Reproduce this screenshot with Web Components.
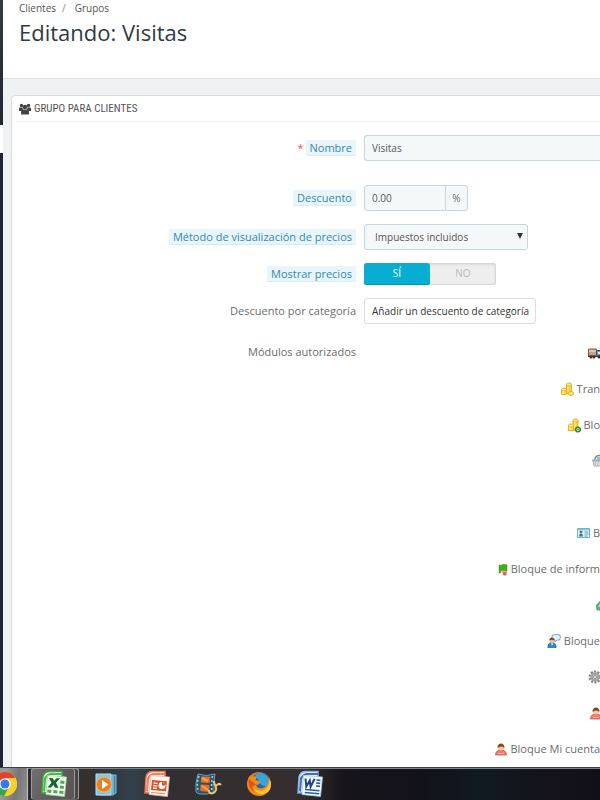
<!DOCTYPE html>
<html lang="es">
<head>
<meta charset="utf-8">
<meta name="viewport" content="width=device-width, initial-scale=1">
<title>Editando: Visitas</title>
<style>
  html, body {
    margin: 0;
    height: 100%;
  }
  body {
    font-family: "Open Sans", sans-serif;
    font-size: 11px;
    line-height: 18px;
    color: #6c6c6c;
    background: #eff1f2;
    overflow: hidden;
  }
</style>
</head>
<body>
<desktop-screen>
  <side-strip slot="side"></side-strip>
  <page-header heading="Editando: Visitas">
    <a href="#clientes">Clientes</a>
    <a href="#grupos">Grupos</a>
  </page-header>
  <form-panel heading="Grupo para clientes">
    <form-row label="Nombre" for="name" hint required></form-row>
    <form-row label="Descuento" for="reduction" hint></form-row>
    <form-row label="Método de visualización de precios" for="method" hint></form-row>
    <form-row label="Mostrar precios" for="show" hint></form-row>
    <form-row label="Descuento por categoría" for="category"></form-row>
    <form-row label="Módulos autorizados" for="modules"></form-row>
  </form-panel>
  <task-bar slot="taskbar"></task-bar>
</desktop-screen>

<script>
// 16px high module icons. The ones at the edge of the list are narrower.
const moduleIcons = {
  truck: `<svg width="12" height="16" viewBox="0 0 12 16"><path d="M0.5 4h8v7h-8z" fill="#c9a184" stroke="#7d5d48"/><path d="M1 5h7v2H1z" fill="#e2c3aa"/><path d="M8.500 5.500H14.500V11H8.500z" fill="#5d9fd6" stroke="#31577d"/><path d="M10 7h3v2h-3z" fill="#d4efff"/><path d="M0 10.500h15v1.500H0z" fill="#58453c"/><circle cx="3" cy="12" r="1.500" fill="#333"/><circle cx="6" cy="12" r="1.500" fill="#333"/><circle cx="11" cy="12" r="1.500" fill="#333"/></svg>`,
  coins: `<svg width="13" height="16" viewBox="0 0 13 16"><path d="M5.500 3.500v9h5v-9z" fill="#fbce3c" stroke="#e9b020"/><ellipse cx="8" cy="3.500" rx="2.500" ry="1.500" fill="#ffec8a" stroke="#e9b020"/><path d="M.5 8.500v5h5v-5z" fill="#fdd850" stroke="#e9b020"/><ellipse cx="3" cy="8.500" rx="2.500" ry="1.500" fill="#fff0a0" stroke="#e9b020"/><path d="M7 5v6M2 10v3" stroke="#fff2a0"/><ellipse cx="10" cy="12.500" rx="2.500" ry="2" fill="#ffe98a" stroke="#e8a820"/></svg>`,
  coinsAdd: `<svg width="13" height="16" viewBox="0 0 13 16"><path d="M5 3.500v10h5v-10z" fill="#fbce3c" stroke="#e9b020"/><ellipse cx="7.500" cy="3.500" rx="2.500" ry="1.500" fill="#ffec8a" stroke="#e9b020"/><path d="M.5 8.500v5h5v-5z" fill="#fdd850" stroke="#e9b020"/><ellipse cx="3" cy="8.500" rx="2.500" ry="1.500" fill="#fff0a0" stroke="#e9b020"/><path d="M7 5v6M2 10v3" stroke="#fff2a0"/><circle cx="10" cy="12.500" r="2.300" fill="#fff" stroke="#2f8a2c" stroke-width="1.600"/><path d="M9 12.500h2M10 11.500v2" stroke="#5aa955"/></svg>`,
  basket: `<svg width="8" height="16" viewBox="0 0 8 16"><path d="M3 7a4 4 0 0 1 6-4" fill="none" stroke="#6a8ea5" stroke-width="1.500"/><path d="M5 4h6v4H5z" fill="#8bc0e0"/><path d="M0 6.500h11V8H0z" fill="#b2b8ba"/><path d="M1 8h10v5H2z" fill="#dde0e0" stroke="#a4aaac"/><path d="M3.500 8.500v4M6 8.500v4M8.500 8.500v4" stroke="#b8bec0"/></svg>`,
  card: `<svg width="13" height="16" viewBox="0 0 13 16"><path d="M.5 3.500h12v9H.5z" fill="#dff3fb" stroke="#69b3d1"/><path d="M1 4h11v1.500H1z" fill="#8ccbe4"/><circle cx="4" cy="7" r="1.500" fill="#9b6a43"/><path d="M2 11.500c0-4 4-4 4 0z" fill="#2b80ad"/><path d="M7.500 7h4M7.500 9h4M7.500 11h3" stroke="#5ba4c4"/></svg>`,
  flag: `<svg width="10" height="16" viewBox="0 0 10 16"><path d="M1 4l2.500.3L5 3.300l4 .5V10H5.500L4 9.500 2.500 10v2H1z" fill="#44ad13" stroke="#3a9a10" stroke-width=".5"/><path d="M4 10.500h5l-.8 4H5.500z" fill="#d9606d"/><path d="M3.300 10.500h5" stroke="#eea0ac" stroke-width="1.500"/></svg>`,
  tag: `<svg width="4" height="16" viewBox="0 0 4 16"><path d="M.5 8L3 5.500 5 3v10H1z" fill="#4ebc75" stroke="#339b5b" stroke-width=".8"/><path d="M1.800 9l3-3v5z" fill="#a2e4b8"/></svg>`,
  chat: `<svg width="14" height="16" viewBox="0 0 14 16"><path d="M5.500 2q4-1 7.500 0 1 3-.5 5H10l-2 2V7H5.500q-1.500-2 0-5z" fill="#e1f3fd" stroke="#6cabd3"/><path d="M.8 14.500c0-7 8.400-7 8.400 0z" fill="#2d86cf" stroke="#1b60a0" stroke-width=".7"/><circle cx="5" cy="8" r="2.300" fill="#f2bd8c"/><path d="M2.300 7.500c0-4 5.400-4 5.400 0-2-1-3-1-5.400 0z" fill="#7a4419"/><path d="M4 10.500l1 2 1.500-2z" fill="#fff"/></svg>`,
  gear: `<svg width="12" height="16" viewBox="0 0 12 16"><circle cx="7" cy="8" r="5" fill="none" stroke="#858585" stroke-width="3" stroke-dasharray="2 1.140"/><circle cx="7" cy="8" r="3.500" fill="#ddd" stroke="#a4a4a4" stroke-width="2.500"/><circle cx="7" cy="8" r="1.500" fill="#fff" stroke="#888"/></svg>`,
  userEdge: `<svg width="10" height="16" viewBox="0 0 10 16"><path d="M.5 14c0-7 11-7 11 0z" fill="#f27d70" stroke="#c34a3e" stroke-width=".7"/><circle cx="6" cy="6.500" r="3" fill="#f5c79e"/><path d="M2.500 7c-.5-6 7.500-6 7 0-2-2-4-2-7 0z" fill="#874319"/><path d="M3 12.500h6" stroke="#ffb0a5"/></svg>`,
  user: `<svg width="12" height="16" viewBox="0 0 12 16"><path d="M.5 14c0-7 11-7 11 0z" fill="#f27d70" stroke="#c34a3e" stroke-width=".7"/><circle cx="6" cy="6.500" r="3" fill="#f5c79e"/><path d="M2.500 7c-.5-6 7.500-6 7 0-2-2-4-2-7 0z" fill="#874319"/><path d="M3 12.500h6" stroke="#ffb0a5"/></svg>`
};

const modules = [
  ["truck", ""],
  ["coins", "Tran"],
  ["coinsAdd", "Blo"],
  ["basket", ""],
  ["", ""],
  ["card", "B"],
  ["flag", "Bloque de inform"],
  ["tag", ""],
  ["chat", "Bloque"],
  ["gear", ""],
  ["userEdge", ""],
  ["user", "Bloque Mi cuenta"]
];

const taskIcons = {
  chrome: `<svg width="28" height="28" viewBox="0 0 28 28"><circle cx="5" cy="14" r="12" fill="#f9cd28"/><path d="M5 14L-5.400 8A12 12 0 0 1 15.400 8H5z" fill="#e3402f"/><path d="M5 14L-5.400 8A12 12 0 0 0 4 26l5-9z" fill="#35a650"/><path d="M5 8.500h10.700a12 12 0 0 1-10.700 17.500l5-9z" fill="#fbd02b"/><circle cx="5" cy="14" r="5.800" fill="#fff"/><circle cx="5" cy="14" r="4.500" fill="#317ce8"/></svg>`,
  excel: `<svg width="26" height="28" viewBox="0 0 26 28"><path d="M1 23L2 7Q3 2 8 1.500h13V22z" fill="#e6f6e2" stroke="#3fa845" stroke-width="1.500"/><path d="M2 21L3 8Q5 4 9 3h12v2H10Q6 5 5 10L4 22z" fill="#51b853"/><path d="M6.500 5.500l19 1.500-2 19.500-18.500-2z" fill="#f3fbf0" stroke="#a5cfa0" stroke-width=".8"/><path d="M6.500 19.500l4 .4-.3 3-4-.3zM12.500 20l4 .4-.3 3-4-.3zM18.500 20.500l4 .4-.3 3-4-.3zM19 15.500l4 .4-.3 3-4-.3zM19.500 10.500l4 .4-.3 3-4-.3z" fill="#52a956"/><path d="M8 8h3.500l1.700 2.800L15.500 8.300H19l-4 4.500 2.500 5H14l-1.500-3-2.500 2.700H6.500l4-4.700z" fill="#11682b"/></svg>`,
  media: `<svg width="24" height="26" viewBox="0 0 24 26"><path d="M6 4h16v18l-3 2H6z" fill="#3f87a9" stroke="#75c0dc"/><path d="M4 3h15v21H4z" fill="#4d9fc3"/><path d="M2 3h15v21H2z" fill="#83c8df" stroke="#b0e3ef"/><path d="M19 4v19" stroke="#99d3e7"/><circle cx="10" cy="13.500" r="7.500" fill="#ef7e20" stroke="#ffb15d"/><path d="M8 9l6.500 4.500L8 18z" fill="#fff"/></svg>`,
  powerpoint: `<svg width="26" height="28" viewBox="0 0 26 28"><path d="M1 23L2 7Q3 2 8 1.500h13V22z" fill="#fff0e8" stroke="#e97650" stroke-width="1.500"/><path d="M2 21L3 8Q5 4 9 3h12v2H10Q6 5 5 10L4 22z" fill="#ee8460"/><path d="M6.500 5.500l19 1.500-2 19.500-18.500-2z" fill="#fff8f3" stroke="#ecb09b" stroke-width=".8"/><path d="M8 10l15 1.200-1 10L7 20z" fill="#e04f24"/><circle cx="18" cy="15.500" r="3.500" fill="#fff"/><path d="M18 15.500V12a4 4 0 0 1 3.500 3.500z" fill="#e04f24"/><path d="M9.500 13l4 .4M9.300 15.500l4 .4M9 18l4 .4" stroke="#fff" stroke-width="1.300"/><path d="M7 22.500l14 1.200" stroke="#eb8057"/></svg>`,
  movie: `<svg width="28" height="26" viewBox="0 0 28 26"><path d="M4 3q8 3 17 0-2 10-1 18-7 3-13 2-4 0-5-2Q1 12 4 3z" fill="#26556b" stroke="#63a2bd"/><path d="M7.500 5.500l8.500.3-.5 6.200-8.800-.6zM6.500 13.500l8.800.5v7l-9-1z" fill="#ed6d27"/><path d="M8 7l6 3M8 15l6 4" stroke="#ff9f48" stroke-width="2"/><path d="M5 5Q2 13 4.500 21M18.500 5q-1.500 9-.5 16" fill="none" stroke="#a6d7e8" stroke-width="1.500" stroke-dasharray="2 2"/><path d="M20 10c0 5 3 5 2 9-2 5-8 4-7 0M21 16q4-5 6-2" fill="none" stroke="#efc66a" stroke-width="2"/></svg>`,
  firefox: `<svg width="28" height="28" viewBox="0 0 28 28"><circle cx="14" cy="14" r="12" fill="#ef7b15"/><circle cx="15.500" cy="11.500" r="9" fill="#176bb3"/><path d="M10 4.500q7-4 13 3 2 4 0 8-6 2-9-4z" fill="#38a5da"/><path d="M3.500 8l2-3 1 2.500q3-2 5.500-1L10.500 10l5 1.500q-1 3.500-4.500 3.500 1.500 4 6.500 3 5-1.500 6-6.500V8q5 8-.5 14-7.500 6.500-16 1Q.500 17 3.500 8z" fill="#f28a1c"/><path d="M24.500 9q.5 9-7 11.500-6 1-9-3.500 1 6 8 7.500 9.500-1 9.500-11.500z" fill="#ffc52a"/><path d="M4 9q-2 8 5 13l-2-6 4-1-4.500-4z" fill="#de5414"/></svg>`,
  word: `<svg width="26" height="28" viewBox="0 0 26 28"><path d="M1 23L2 7Q3 2 8 1.500h13V22z" fill="#edf5ff" stroke="#8fb0dc" stroke-width="1.500"/><path d="M2 21L3 8Q5 4 9 3h12v2H10Q6 5 5 10L4 22z" fill="#3e73b5"/><path d="M6.500 5.500l19 1.500-2 19.500-18.500-2z" fill="#fafdff" stroke="#a9c0de" stroke-width=".8"/><path d="M19.500 10l4 .4M19.200 13l4 .4M19 16l4 .4M8 19.500l14.500 1.200M7.700 22.500l14.500 1.200" stroke="#2a5d9e" stroke-width="1.600"/><path d="M8.500 8.500l.8 8 3.500-6 .8 6.300 4-8" fill="none" stroke="#1c4587" stroke-width="2"/></svg>`
};

class DesktopScreen extends HTMLElement {
  constructor() {
    super();
    this.attachShadow({ mode: "open" }).innerHTML = `
      <style>
        :host {
          display: flex;
          flex-direction: column;
          height: 100vh;
        }
        .browser {
          flex: 1;
          min-height: 0;
          display: flex;
          overflow: hidden;
        }
        main {
          flex: 1;
          min-width: 0;
          display: flex;
          flex-direction: column;
        }
      </style>
      <div class="browser">
        <slot name="side"></slot>
        <main><slot></slot></main>
      </div>
      <slot name="taskbar"></slot>
    `;
  }
}

class SideStrip extends HTMLElement {
  constructor() {
    super();
    this.attachShadow({ mode: "open" }).innerHTML = `
      <style>
        :host {
          display: flex;
          flex-direction: column;
          width: 3px;
        }
        .top {
          height: 125px;
          background: linear-gradient(#343b49, #20242e);
        }
        .current {
          height: 28px;
          background: #fff;
        }
        .rest {
          flex: 1;
          background: #202430;
        }
      </style>
      <div class="top"></div>
      <div class="current"></div>
      <div class="rest"></div>
    `;
  }
}

class PageHeader extends HTMLElement {
  constructor() {
    super();
    this.attachShadow({ mode: "open" }).innerHTML = `
      <style>
        :host {
          display: block;
          box-sizing: border-box;
          height: 79px;
          padding: 0 16px;
          background: #fff;
          border-bottom: 1px solid #dfe2e4;
        }
        nav {
          display: flex;
          height: 16px;
          line-height: 16px;
          font-size: 10px;
        }
        ::slotted(a) {
          color: #555;
          text-decoration: none;
        }
        ::slotted(a:not(:last-child))::after {
          content: "/";
          padding: 0 9px 0 6px;
          color: #888;
        }
        h1 {
          margin: 0;
          font-size: 22px;
          line-height: 32px;
          font-weight: 400;
          color: #2f3b42;
        }
      </style>
      <nav><slot></slot></nav>
      <h1>${this.getAttribute("heading")}</h1>
    `;
  }
}

class FormPanel extends HTMLElement {
  constructor() {
    super();
    this.attachShadow({ mode: "open" }).innerHTML = `
      <style>
        :host {
          display: block;
          flex: 1;
          margin: 16px 0 0 8px;
          padding: 0 0 0 4px;
          background: #fff;
          border: 1px solid #d8dde0;
          border-width: 1px 0 0 1px;
          border-top-left-radius: 5px;
        }
        h2 {
          display: flex;
          align-items: center;
          gap: 3px;
          margin: 0 0 13px;
          padding-left: 3px;
          height: 25px;
          border-bottom: 1px solid #eee;
          font-family: "Ubuntu Condensed", "Roboto Condensed", "Open Sans Condensed", sans-serif;
          font-size: 11px;
          font-weight: 400;
          text-transform: uppercase;
          color: #555;
        }
        form {
          display: grid;
          row-gap: 13px;
        }
      </style>
      <h2>
        <svg width="12" height="12" viewBox="0 0 12 12" fill="#444"><circle cx="2.500" cy="2.500" r="1.700"/><circle cx="9.500" cy="2.500" r="1.700"/><path d="M0 8V5.500Q0 4.500 1 4.500h2.500L4 7l-1.500 1zM12 8V5.500q0-1-1-1H8.500L8 7l1.500 1z"/><circle cx="6" cy="4" r="2.300"/><path d="M2 11.500V9q0-2.500 2.500-2.500h3Q10 6.500 10 9v2.500z"/></svg>
        ${this.getAttribute("heading")}
      </h2>
      <form><slot></slot></form>
    `;
  }
}

class FormRow extends HTMLElement {
  constructor() {
    super();
    const kind = this.getAttribute("for");
    const label = this.getAttribute("label");
    const hint = this.hasAttribute("hint") ? "hint" : "";
    const star = this.hasAttribute("required") ? `<span class="star">*</span>` : "";
    // switch and list are groups, so their caption is not tied to one input
    const caption = kind === "show" || kind === "modules" || kind === "category"
      ? `<span id="caption" class="${hint}">${label}</span>`
      : `<label for="${kind}" class="${hint}">${label}</label>`;

    this.attachShadow({ mode: "open" }).innerHTML = `
      <style>
        :host {
          display: grid;
          grid-template-columns: 340px minmax(0, 1fr);
          column-gap: 8px;
          align-items: start;
        }
        :host([for="name"]) {
          min-height: 37px;
        }
        .caption {
          display: flex;
          justify-content: flex-end;
          align-items: center;
          gap: 2px;
          height: 26px;
        }
        :host([for="show"]) .caption {
          height: 22px;
        }
        :host([for="modules"]) .caption {
          height: 30px;
        }
        .hint {
          padding: 0 4px;
          line-height: 16px;
          color: #3388b0;
          background: #e8f6fc;
          border-radius: 2px;
          box-shadow: inset 0 -1px #d6edf6;
        }
        .star {
          color: #f05050;
        }
        input, select, button {
          font: inherit;
          font-size: 10px;
          color: #555;
        }
        .field {
          display: block;
          box-sizing: border-box;
          height: 26px;
          padding: 0 7px;
          background: #f5f8f9;
          border: 1px solid #c7d6db;
          border-radius: 3px;
          outline: none;
        }
        #name {
          width: 100%;
          border-right: 0;
          border-radius: 3px 0 0 3px;
        }
        .group {
          display: flex;
        }
        #reduction {
          width: 82px;
          border-radius: 3px 0 0 3px;
        }
        .addon {
          box-sizing: border-box;
          width: 22px;
          height: 26px;
          line-height: 24px;
          border: 1px solid #c7d6db;
          border-left: 0;
          border-radius: 0 3px 3px 0;
          background: #f5f8f9;
          font-size: 10px;
          text-align: center;
        }
        .select {
          display: grid;
          grid-template-columns: 164px;
          align-items: center;
        }
        .select > * {
          grid-area: 1 / 1;
        }
        #method {
          appearance: none;
          width: 100%;
          padding-left: 10px;
        }
        .select svg {
          justify-self: end;
          margin-right: 5px;
          pointer-events: none;
        }
        .switch {
          display: grid;
          grid-template-columns: 66px 66px;
          width: max-content;
          height: 22px;
          border-radius: 3px;
          background: #eee;
          box-shadow: inset 0 0 0 1px #d8d8d8, inset 0 1px 3px #ccc;
        }
        .switch input {
          position: absolute;
          opacity: 0;
          pointer-events: none;
        }
        .switch label {
          line-height: 21px;
          font-size: 10px;
          text-align: center;
          color: #bbb;
          border-radius: 3px;
        }
        .switch input:checked + label {
          background: #08aed1;
          box-shadow: inset 0 -1px #0595b5;
          color: #fff;
        }
        button {
          display: block;
          height: 26px;
          padding: 0 6px 0 7px;
          background: #fff;
          border: 1px solid #ddd;
          border-radius: 3px;
          color: #333;
        }
        ul {
          display: grid;
          row-gap: 18px;
          margin: 0;
          padding: 7px 0 0;
          list-style: none;
        }
        li {
          display: flex;
          justify-content: flex-end;
          align-items: center;
          gap: 3px;
          height: 18px;
          white-space: nowrap;
        }
        li svg {
          flex: none;
        }
      </style>
      <div class="caption">${star}${caption}</div>
      ${this.control(kind)}
    `;
  }

  control(kind) {
    switch (kind) {
      case "name":
        return `<input id="name" class="field" type="text" value="Visitas">`;
      case "reduction":
        return `
          <div class="group">
            <input id="reduction" class="field" type="text" value="0.00">
            <span class="addon">%</span>
          </div>`;
      case "method":
        return `
          <div class="select">
            <select id="method" class="field"><option>Impuestos incluidos</option></select>
            <svg width="6" height="10" viewBox="0 0 6 10"><path d="M0 1h6L3 7z" fill="#333"/></svg>
          </div>`;
      case "show":
        return `
          <div class="switch" role="radiogroup" aria-labelledby="caption">
            <input id="yes" type="radio" name="show" checked><label for="yes">SÍ</label>
            <input id="no" type="radio" name="show"><label for="no">NO</label>
          </div>`;
      case "category":
        return `<div><button type="button">Añadir un descuento de categoría</button></div>`;
      default:
        return `
          <ul aria-labelledby="caption">
            ${modules
              .map(([icon, text]) => `<li>${moduleIcons[icon] || ""}${text ? `<span>${text}</span>` : ""}</li>`)
              .join("")}
          </ul>`;
    }
  }
}

class TaskBar extends HTMLElement {
  constructor() {
    super();
    this.attachShadow({ mode: "open" }).innerHTML = `
      <style>
        :host {
          position: relative;
          display: flex;
          gap: 3px;
          box-sizing: border-box;
          height: 33px;
          border-top: 1px solid #3c424b;
          box-shadow: inset 0 1px #7c838c;
          background: linear-gradient(90deg, #262a32 0, #37302f 90px, #32404b 132px, #332e31 165px, #342e30 300px, #17151b 345px, #121119 420px, #101a22 480px, #14131b 540px, #111018);
        }
        button {
          display: flex;
          align-items: center;
          justify-content: center;
          width: 48px;
          padding: 0;
          border: 0;
          background: none;
        }
        svg {
          flex: none;
        }
        .chrome {
          width: 28px;
          background: linear-gradient(100deg, #999 20%, #777 60%, #909090);
          border-right: 1px solid #c0c0c0;
          box-sizing: border-box;
          overflow: hidden;
          justify-content: flex-start;
        }
        .excel {
          border: 1px solid #9b9b9b;
          border-bottom-color: #666;
          border-radius: 3px;
          background: linear-gradient(120deg, #6f716f, #5e5859 60%, #5b5454);
          box-shadow: inset -3px 0 #494445, inset -4px 0 #9b9b9b;
          box-sizing: border-box;
          padding-right: 3px;
        }
      </style>
      ${Object.entries(taskIcons)
        .map(([name, icon]) => `<button type="button" class="${name}" aria-label="${name}">${icon}</button>`)
        .join("")}
    `;
  }
}

customElements.define("desktop-screen", DesktopScreen);
customElements.define("side-strip", SideStrip);
customElements.define("page-header", PageHeader);
customElements.define("form-panel", FormPanel);
customElements.define("form-row", FormRow);
customElements.define("task-bar", TaskBar);
</script>
</body>
</html>
